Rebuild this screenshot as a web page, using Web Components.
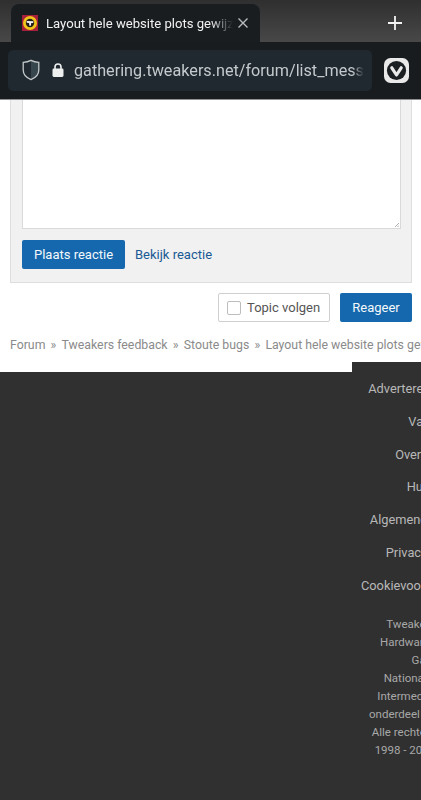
<!DOCTYPE html>
<html lang="nl">
<head>
<meta charset="utf-8">
<title>Layout hele website plots gewijzigd</title>
<style>
    html, body {
        margin: 0;
        height: 800px;
        overflow: hidden;
        background: #fff;
        font-family: Roboto, "Liberation Sans", sans-serif;
    }

    #page {
        display: flex;
        flex-direction: column;
        width: 421px;
        height: 800px;
        overflow: hidden;
    }
</style>
</head>
<body>
<div id="page">
    <browser-tabs>Layout hele website plots gewijzigd</browser-tabs>
    <browser-toolbar>gathering.tweakers.net/forum/list_messages/2044446</browser-toolbar>
    <reply-form></reply-form>
    <topic-actions></topic-actions>
    <bread-crumbs>
        <span>Forum</span>
        <span>Tweakers feedback</span>
        <span>Stoute bugs</span>
        <span>Layout hele website plots gewijzigd</span>
    </bread-crumbs>
    <site-footer></site-footer>
</div>

<template id="browser-tabs">
    <style>
        :host {
            display: flex;
            align-items: flex-end;
            flex: none;
            height: 42px;
            padding-left: 11px;
            box-sizing: border-box;
            background: linear-gradient(#2f2f2f, #484848);
        }

        .tab {
            display: flex;
            align-items: center;
            width: 249px;
            height: 38px;
            padding: 0 10px 0 11px;
            box-sizing: border-box;
            background: #1a1d20;
            border-radius: 8px 8px 0 0;
        }

        svg {
            flex: none;
        }

        .title {
            flex: 1;
            min-width: 0;
            margin-left: 8px;
            overflow: hidden;
            white-space: nowrap;
            color: #f1f2f2;
            font-size: 13.1px;
            -webkit-mask-image: linear-gradient(to right, #000 88%, transparent 100%);
            mask-image: linear-gradient(to right, #000 88%, transparent 100%);
        }

        .close {
            margin-left: 3px;
        }

        .plus {
            margin-left: 127px;
            margin-bottom: 11px;
        }
    </style>
    <div class="tab">
        <svg width="16" height="16" viewBox="0 0 16 16">
            <rect width="16" height="16" fill="#a5203a"></rect>
            <circle cx="8" cy="8" r="7" fill="#f0c419"></circle>
            <circle cx="8" cy="8" r="4.2" fill="#23201c"></circle>
            <path d="M4.6 6 L11.4 6.2 L11.2 8 L9.2 8 L8.8 10.8 L7.4 10.8 L7.1 8 L4.8 7.8 Z" fill="#f4f4f4"></path>
        </svg>
        <div class="title"><slot></slot></div>
        <svg class="close" width="14" height="14" viewBox="0 0 14 14">
            <path d="M2.5 2.5 L11.5 11.5 M11.5 2.5 L2.5 11.5" stroke="#b9bcbe" stroke-width="1.4" fill="none"></path>
        </svg>
    </div>
    <svg class="plus" width="16" height="16" viewBox="0 0 16 16">
        <path d="M8 1 V15 M1 8 H15" stroke="#f4f4f4" stroke-width="1.8" fill="none"></path>
    </svg>
</template>

<template id="browser-toolbar">
    <style>
        :host {
            display: flex;
            align-items: center;
            flex: none;
            height: 58px;
            padding: 0 0 1px 8px;
            box-sizing: border-box;
            background: #181c1f;
            border-bottom: 1px solid #8f9192;
        }

        .address {
            display: flex;
            align-items: center;
            width: 364px;
            height: 41px;
            padding: 0 8px 0 14px;
            box-sizing: border-box;
            background: #20292f;
            border-radius: 5px;
        }

        svg {
            flex: none;
        }

        .url {
            flex: 1;
            min-width: 0;
            margin-left: 10px;
            overflow: hidden;
            white-space: nowrap;
            color: #c4cacd;
            font-size: 16.2px;
            -webkit-mask-image: linear-gradient(to right, #000 96%, transparent 100%);
            mask-image: linear-gradient(to right, #000 96%, transparent 100%);
        }

        .lock {
            margin-left: 12px;
        }

        .vivaldi {
            margin-left: 12px;
        }
    </style>
    <div class="address">
        <svg width="18" height="22" viewBox="0 0 18 22">
            <path d="M9 1.3 C6.5 2.6 4 3.2 1.2 3.4 V11 C1.2 15.5 4.5 18.8 9 20.6 Z" fill="#20292f"></path>
            <path d="M9 1.3 C11.5 2.6 14 3.2 16.8 3.4 V11 C16.8 15.5 13.5 18.8 9 20.6 Z" fill="#37454c"></path>
            <path d="M9 1.3 C6.5 2.6 4 3.2 1.2 3.4 V11 C1.2 15.5 4.5 18.8 9 20.6 C13.5 18.8 16.8 15.5 16.8 11 V3.4 C14 3.2 11.5 2.6 9 1.3 Z" fill="none" stroke="#c3c8ca" stroke-width="1.3"></path>
        </svg>
        <svg class="lock" width="12" height="14" viewBox="0 0 12 14">
            <path d="M3 6 V4 A3 3 0 0 1 9 4 V6" fill="none" stroke="#eef0f0" stroke-width="1.6"></path>
            <rect x="0.5" y="5.5" width="11" height="8.5" rx="1.4" fill="#eef0f0"></rect>
        </svg>
        <div class="url"><slot></slot></div>
    </div>
    <svg class="vivaldi" width="25" height="25" viewBox="0 0 25 25">
        <rect width="25" height="25" rx="6.5" fill="#e9e9e9"></rect>
        <circle cx="12.5" cy="12.5" r="9.6" fill="#1c1f22"></circle>
        <path d="M7.8 9.8 L12.5 17 L17.2 9.8" fill="none" stroke="#e9e9e9" stroke-width="3.2" stroke-linecap="round" stroke-linejoin="round"></path>
    </svg>
</template>

<template id="reply-form">
    <style>
        :host {
            display: block;
            flex: none;
            height: 183px;
            margin: 0 9px 0 10px;
            padding: 0 10px 0 11px;
            box-sizing: border-box;
            background: #f1f1f1;
            border: 1px solid #dedede;
            border-top: 0;
        }

        .textarea {
            position: relative;
            height: 129px;
            box-sizing: border-box;
            background: #fff;
            border: 1px solid #d9d9d9;
            border-top: 0;
        }

        .grip {
            position: absolute;
            right: 1px;
            bottom: 1px;
        }

        .row {
            display: flex;
            align-items: center;
            margin-top: 11px;
        }

        .btn {
            display: flex;
            align-items: center;
            justify-content: center;
            width: 103px;
            height: 29px;
            background: #1568ad;
            border-radius: 2px;
            color: #f4f8fb;
            font-size: 13px;
        }

        .link {
            margin-left: 10px;
            color: #1a5a94;
            font-size: 13px;
        }
    </style>
    <div class="textarea">
        <svg class="grip" width="5" height="5" viewBox="0 0 5 5">
            <path d="M1 5 L5 1 M3.5 5 L5 3.5" stroke="#9a9a9a" stroke-width="0.8" fill="none"></path>
        </svg>
    </div>
    <div class="row">
        <div class="btn">Plaats reactie</div>
        <div class="link">Bekijk reactie</div>
    </div>
</template>

<template id="topic-actions">
    <style>
        :host {
            display: flex;
            justify-content: flex-end;
            flex: none;
            gap: 10px;
            margin-top: 10px;
            padding-right: 9px;
            font-size: 13px;
            white-space: nowrap;
        }

        .follow {
            display: flex;
            align-items: center;
            width: 112px;
            height: 29px;
            padding-left: 8px;
            box-sizing: border-box;
            background: #fff;
            border: 1px solid #cfcfcf;
            border-radius: 2px;
            color: #555;
        }

        .check {
            flex: none;
            width: 14px;
            height: 14px;
            margin-right: 6px;
            box-sizing: border-box;
            background: #fff;
            border: 1px solid #bdbdbd;
            border-radius: 2px;
        }

        .reply {
            display: flex;
            align-items: center;
            justify-content: center;
            width: 72px;
            height: 29px;
            background: #1568ad;
            border-radius: 2px;
            color: #f4f8fb;
        }
    </style>
    <div class="follow"><span class="check"></span>Topic volgen</div>
    <div class="reply">Reageer</div>
</template>

<template id="bread-crumbs">
    <style>
        :host {
            display: flex;
            flex: none;
            height: 20px;
            margin-top: 13px;
            padding-left: 10px;
            align-items: center;
            overflow: hidden;
            white-space: nowrap;
            color: #8a8a8a;
            font-size: 12.3px;
        }

        ::slotted(span:not(:first-child))::before {
            content: "»";
            margin: 0 5.2px;
        }
    </style>
    <slot></slot>
</template>

<template id="site-footer">
    <style>
        :host {
            display: block;
            flex: 1;
            margin-top: 17px;
            background: #303030;
            color: #b8b8b8;
        }

        .col {
            width: 188px;
            margin: -10px 0 0 352px;
            padding-top: 17px;
            background: #303030;
            text-align: center;
            white-space: nowrap;
        }

        nav {
            padding-right: 18px;
        }

        nav div {
            height: 32.8px;
            line-height: 20px;
            font-size: 12.8px;
        }

        p {
            margin: 6px 0 0;
            color: #a8a8a8;
            font-size: 11.5px;
            line-height: 18px;
        }
    </style>
    <div class="col">
        <nav>
            <div>Adverteren op Tweakers</div>
            <div>Vacatures</div>
            <div>Over Tweakers</div>
            <div>Huisregels</div>
            <div>Algemene voorwaarden</div>
            <div>Privacy statement</div>
            <div>Cookievoorkeuren wijzigen</div>
        </nav>
        <p>
            Tweakers vormt samen<br>
            Hardware Info, AutoTrack,<br>
            Gaspedaal.nl,<br>
            Nationale Vacaturebank,<br>
            Intermediair en Independer<br>
            onderdeel van DPG Media B.V.<br>
            Alle rechten voorbehouden ©<br>
            1998 - 2021 DPG Media B.V.
        </p>
    </div>
</template>

<script>
    // every element just clones its own template into an open shadow root
    for (const name of ["browser-tabs", "browser-toolbar", "reply-form", "topic-actions", "bread-crumbs", "site-footer"]) {
        customElements.define(
            name,
            class extends HTMLElement {
                constructor() {
                    super();
                    const template = document.getElementById(name);
                    const shadowRoot = this.attachShadow({ mode: "open" });
                    shadowRoot.appendChild(template.content.cloneNode(true));
                }
            }
        );
    }
</script>
</body>
</html>
